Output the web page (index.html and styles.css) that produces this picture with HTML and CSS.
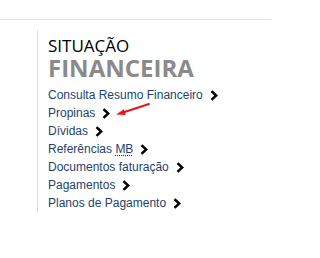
FILE: index.html
```html
<!DOCTYPE html>
<html>
<head>
<meta charset="utf-8">
<link rel="stylesheet" href="styles.css">
</head>
<body>
<div class="topbar"></div>
<div class="panel">
  <div class="title1">SITUAÇÃO</div>
  <div class="title2">FINANCEIRA</div>
  <ul class="menu">
    <li><a href="#">Consulta Resumo Financeiro</a><svg class="chev" viewBox="0 0 8 11" width="8" height="11"><polyline points="1.5,1.2 6.2,5.5 1.5,9.8"/></svg></li>
    <li><a href="#">Propinas</a><svg class="chev" viewBox="0 0 8 11" width="8" height="11"><polyline points="1.5,1.2 6.2,5.5 1.5,9.8"/></svg></li>
    <li><a href="#">Dívidas</a><svg class="chev" viewBox="0 0 8 11" width="8" height="11"><polyline points="1.5,1.2 6.2,5.5 1.5,9.8"/></svg></li>
    <li><a href="#">Referências <abbr title="Multibanco">MB</abbr></a><svg class="chev" viewBox="0 0 8 11" width="8" height="11"><polyline points="1.5,1.2 6.2,5.5 1.5,9.8"/></svg></li>
    <li><a href="#">Documentos faturação</a><svg class="chev" viewBox="0 0 8 11" width="8" height="11"><polyline points="1.5,1.2 6.2,5.5 1.5,9.8"/></svg></li>
    <li><a href="#">Pagamentos</a><svg class="chev" viewBox="0 0 8 11" width="8" height="11"><polyline points="1.5,1.2 6.2,5.5 1.5,9.8"/></svg></li>
    <li><a href="#">Planos de Pagamento</a><svg class="chev" viewBox="0 0 8 11" width="8" height="11"><polyline points="1.5,1.2 6.2,5.5 1.5,9.8"/></svg></li>
  </ul>
</div>
<svg class="arrow" width="40" height="20" viewBox="0 0 40 20">
  <line x1="36" y1="4" x2="10" y2="12.5" stroke="#e8151b" stroke-width="2" stroke-linecap="round"/>
  <polygon points="3,14.5 11,9.2 12.8,15" fill="#e8151b"/>
</svg>
</body>
</html>
```
FILE: styles.css
```css
html, body {
  margin: 0;
  padding: 0;
  background: #ffffff;
}
body {
  position: relative;
  width: 271px;
  height: 258px;
  overflow: hidden;
}
.topbar {
  height: 19px;
  border-bottom: 1px solid #e4e4e4;
}
.panel {
  margin: 10px 0 0 37px;
  border-left: 1px solid #dcdcdc;
  padding: 6px 0 0 10px;
}
.title1 {
  font-family: "Open Sans", sans-serif;
  font-size: 17px;
  line-height: 20px;
  color: #000;
}
.title2 {
  font-family: "Open Sans", sans-serif;
  font-weight: 700;
  font-size: 24px;
  line-height: 24px;
  color: #8a8a8a;
  margin-bottom: 6px;
}
.menu {
  list-style: none;
  margin: 0;
  padding: 0;
  font-family: "Liberation Sans", Arial, sans-serif;
  font-size: 12px;
  line-height: 18px;
}
.menu li {
  display: flex;
  align-items: center;
}
.menu a {
  color: #233f70;
  text-decoration: none;
}
.menu abbr {
  text-decoration: underline dotted;
  text-underline-offset: 2px;
}
.chev {
  margin-left: 7px;
  fill: none;
  stroke: #000;
  stroke-width: 2.5;
}
.arrow {
  position: absolute;
  left: 113px;
  top: 100px;
}
```
